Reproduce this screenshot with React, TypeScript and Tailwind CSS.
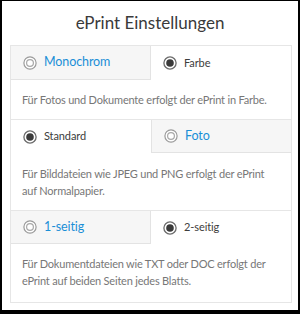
import React from "react";

function Radio({ checked }: { checked: boolean }) {
  if (checked) {
    return (
      <svg width="14" height="14" viewBox="0 0 14 14" className="shrink-0">
        <circle cx="7" cy="7" r="6.1" fill="#fff" stroke="#6b6b6b" strokeWidth="1.3" />
        <circle cx="7" cy="7" r="3.8" fill="#3a3a3a" />
      </svg>
    );
  }
  return (
    <svg width="14" height="14" viewBox="0 0 14 14" className="shrink-0">
      <circle cx="7" cy="7" r="6.1" fill="#fff" stroke="#9a9a9a" strokeWidth="1.2" />
      <circle cx="7" cy="7" r="3.4" fill="none" stroke="#a8a8a8" strokeWidth="1.2" />
    </svg>
  );
}

function Tab({
  label,
  active,
  side,
  h,
}: {
  label: string;
  active: boolean;
  side: "l" | "r";
  h: string;
}) {
  if (active) {
    return (
      <div className={`w-[140px] flex items-center gap-[7px] pl-[12px] bg-white ${h}`}>
        <Radio checked />
        <span className="text-[11px] text-[#3d3d3d] tracking-[-0.1px]">{label}</span>
      </div>
    );
  }
  return (
    <div
      className={`w-[140px] flex items-center gap-[7px] pl-[12px] bg-[#f6f6f6] border-b border-[#e3e3e3] ${
        side === "l" ? "border-r" : "border-l"
      } ${h}`}
    >
      <Radio checked={false} />
      <span className="text-[12.5px] text-[#1a8fd6] tracking-[-0.1px]">{label}</span>
    </div>
  );
}

export default function App() {
  return (
    <div
      className="w-[300px] h-[314px] bg-white border-l-2 border-t border-r-2 border-b-4 border-black flex flex-col overflow-hidden"
      style={{ fontFamily: "Lato, 'Open Sans', sans-serif" }}
    >
      <div className="h-[44px] shrink-0 flex items-center justify-center text-[17px] text-[#3a3a3a]">
        ePrint Einstellungen
      </div>
      <div className="ml-[8px] w-[282px] shrink-0 border border-[#e6e6e6] flex flex-col">
        <div className="flex">
          <Tab label="Monochrom" active={false} side="l" h="h-[34px]" />
          <Tab label="Farbe" active side="r" h="h-[34px]" />
        </div>
        <p className="px-[11px] pt-[11px] pb-[11px] text-[11px] leading-[17px] tracking-[-0.2px] text-[#777]">
          Für Fotos und Dokumente erfolgt der ePrint in Farbe.
        </p>
        <div className="flex border-t border-[#e6e6e6]">
          <Tab label="Standard" active side="l" h="h-[33px]" />
          <Tab label="Foto" active={false} side="r" h="h-[33px]" />
        </div>
        <p className="pl-[11px] pr-[24px] pt-[12px] pb-[11px] text-[11px] leading-[17px] tracking-[-0.2px] text-[#777]">
          Für Bilddateien wie JPEG und PNG erfolgt der ePrint auf Normalpapier.
        </p>
        <div className="flex border-t border-[#e6e6e6]">
          <Tab label="1-seitig" active={false} side="l" h="h-[33px]" />
          <Tab label="2-seitig" active side="r" h="h-[33px]" />
        </div>
        <p className="pl-[11px] pr-[24px] pt-[11px] pb-[13px] text-[11px] leading-[17px] tracking-[-0.2px] text-[#777]">
          Für Dokumentdateien wie TXT oder DOC erfolgt der ePrint auf beiden Seiten jedes Blatts.
        </p>
      </div>
    </div>
  );
}
